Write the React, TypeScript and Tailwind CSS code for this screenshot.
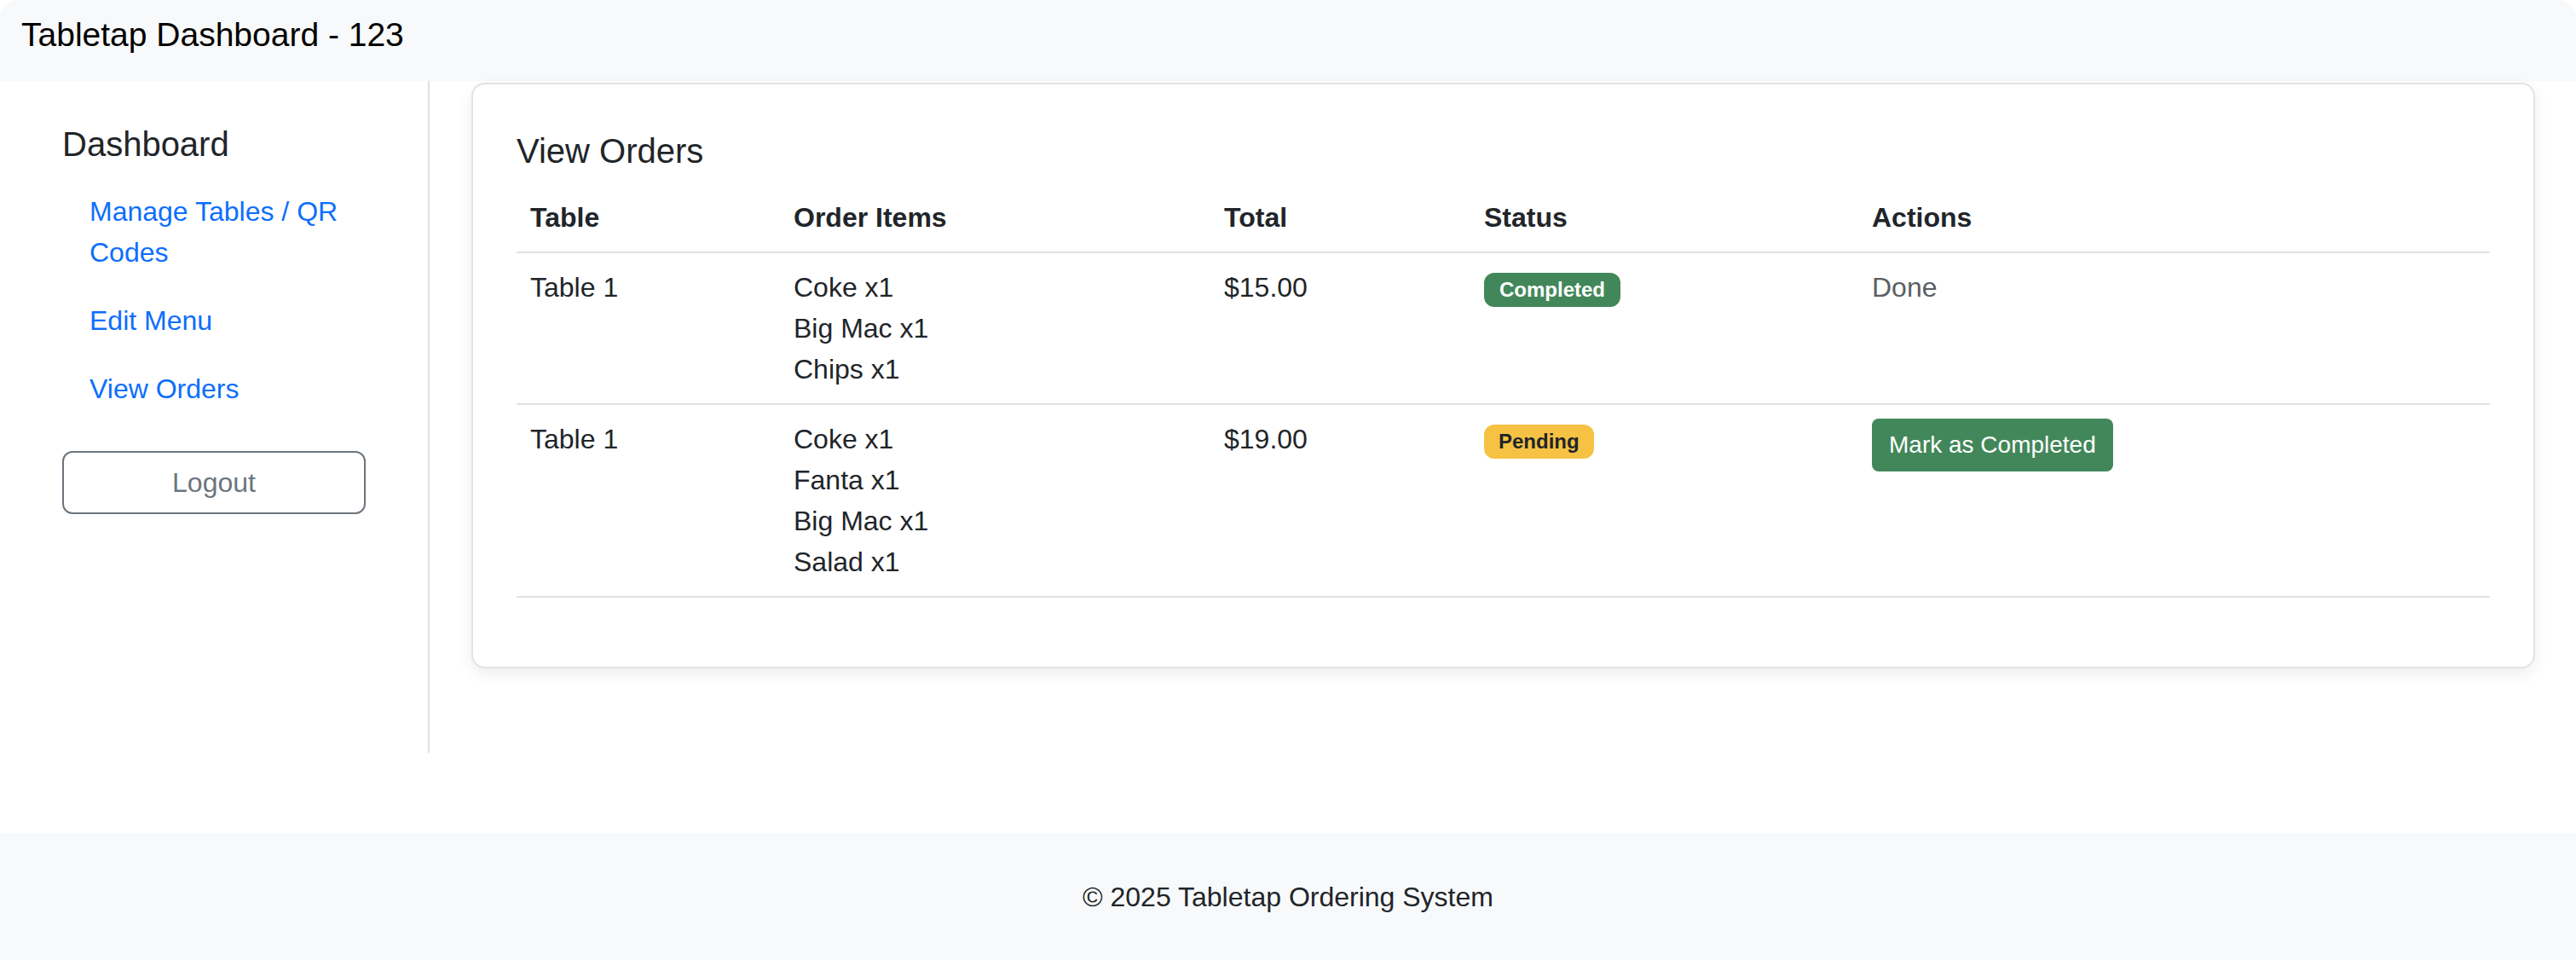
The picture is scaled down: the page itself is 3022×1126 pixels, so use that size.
import React from "react";

const font = { fontFamily: '"Liberation Sans", Arial, sans-serif' };

function Badge({ kind }: { kind: "completed" | "pending" }) {
  if (kind === "completed") {
    return (
      <span className="inline-block rounded-[12px] bg-[#42875a] px-[18px] py-[8px] text-[24px] leading-none font-bold text-white align-baseline">
        Completed
      </span>
    );
  }
  return (
    <span className="inline-block rounded-[12px] bg-[#f6c244] px-[17px] py-[8px] text-[24px] leading-none font-bold text-[#212529] align-baseline">
      Pending
    </span>
  );
}

export default function App() {
  const orders = [
    { table: "Table 1", items: ["Coke x1", "Big Mac x1", "Chips x1"], total: "$15.00", status: "completed" as const },
    { table: "Table 1", items: ["Coke x1", "Fanta x1", "Big Mac x1", "Salad x1"], total: "$19.00", status: "pending" as const },
  ];

  return (
    <div style={font} className="min-h-[1126px] w-full bg-white text-[#212529]">
      {/* Header */}
      <header className="h-[95px] rounded-t-[22px] bg-[#f8f9fa] px-[25px] pt-[17px]">
        <div className="text-[39px] leading-[48px] text-black">Tabletap Dashboard - 123</div>
      </header>

      {/* Main */}
      <div className="flex">
        <aside className="h-[788px] w-[504px] shrink-0 border-r-2 border-[#dee2e6] pl-[73px] pt-[50px]">
          <h5 className="mb-[15px] text-[40px] leading-[48px] font-medium text-[#212529]">Dashboard</h5>
          <nav className="flex flex-col">
            <a className="block px-[32px] py-[16px] text-[32px] leading-[48px] text-[#0d6efd]">
              <span className="block w-[330px]">Manage Tables / QR Codes</span>
            </a>
            <a className="block px-[32px] py-[16px] text-[32px] leading-[48px] text-[#0d6efd]">Edit Menu</a>
            <a className="block px-[32px] py-[16px] text-[32px] leading-[48px] text-[#0d6efd]">View Orders</a>
          </nav>
          <button className="mt-[33px] h-[74px] w-[356px] rounded-[12px] border-2 border-[#6c757d] text-[32px] leading-[48px] text-[#6c757d]">
            Logout
          </button>
        </aside>

        <main className="min-w-0 flex-1 pl-[49px] pr-[48px] pt-[2px]">
          <div className="rounded-[16px] border-2 border-[#e2e3e5] bg-white px-[51px] pb-[81px] pt-[54px] shadow-[0_6px_18px_rgba(0,0,0,0.07)]">
            <h5 className="mb-[14px] text-[40px] leading-[48px] font-medium text-[#212529]">View Orders</h5>
            <table className="w-full table-fixed border-collapse text-[32px] leading-[48px]">
              <colgroup>
                <col className="w-[309px]" />
                <col className="w-[505px]" />
                <col className="w-[305px]" />
                <col className="w-[455px]" />
                <col />
              </colgroup>
              <thead>
                <tr className="border-b-2 border-[#dee2e6]">
                  <th className="px-[16px] py-[16px] text-left font-bold">Table</th>
                  <th className="px-[16px] py-[16px] text-left font-bold">Order Items</th>
                  <th className="px-[16px] py-[16px] text-left font-bold">Total</th>
                  <th className="px-[16px] py-[16px] text-left font-bold">Status</th>
                  <th className="px-[16px] py-[16px] text-left font-bold">Actions</th>
                </tr>
              </thead>
              <tbody>
                {orders.map((o, i) => (
                  <tr key={i} className="border-b-2 border-[#dee2e6]">
                    <td className="px-[16px] py-[16px] align-top">{o.table}</td>
                    <td className="px-[16px] py-[16px] align-top">
                      {o.items.map((it) => (
                        <div key={it}>{it}</div>
                      ))}
                    </td>
                    <td className="px-[16px] py-[16px] align-top">{o.total}</td>
                    <td className="px-[16px] py-[16px] align-top">
                      <Badge kind={o.status} />
                    </td>
                    <td className="px-[16px] py-[16px] align-top">
                      {o.status === "completed" ? (
                        <span className="text-[#5a5e63]">Done</span>
                      ) : (
                        <button className="h-[62px] rounded-[8px] bg-[#42875a] px-[20px] text-[28px] leading-[42px] text-white">
                          Mark as Completed
                        </button>
                      )}
                    </td>
                  </tr>
                ))}
              </tbody>
            </table>
          </div>
        </main>
      </div>

      {/* Footer */}
      <footer className="mt-[94px] flex h-[149px] items-center justify-center bg-[#f8f9fa]">
        <p className="text-[32px] leading-[48px] text-[#212529]">© 2025 Tabletap Ordering System</p>
      </footer>
    </div>
  );
}
